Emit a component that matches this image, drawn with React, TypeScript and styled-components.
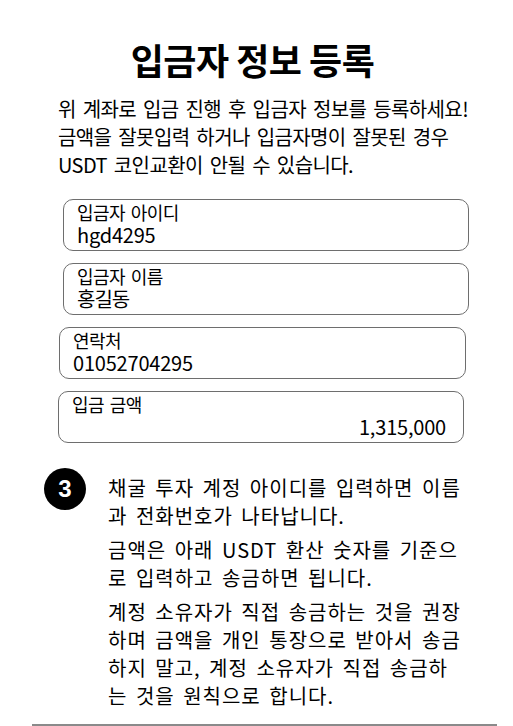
import React from 'react';
import styled, { createGlobalStyle } from 'styled-components';

interface Field {
  label: string,
  value: string,
  right?: boolean,
  hangul?: boolean,
  inset: [number, number]
}

const fields: Field[] = [
  { label: '입금자 아이디', value: 'hgd4295', inset: [63, 44] },
  { label: '입금자 이름', value: '홍길동', hangul: true, inset: [63, 44] },
  { label: '연락처', value: '01052704295', inset: [59, 47] },
  { label: '입금 금액', value: '1,315,000', right: true, inset: [58, 49] },
]

const App = () => {
  return (
    <Page>
      <GlobalStyle />
      <Title>입금자 정보 등록</Title>
      <Intro>
        위 계좌로 입금 진행 후 입금자 정보를 등록하세요!<br />
        금액을 잘못입력 하거나 입금자명이 잘못된 경우<br />
        USDT 코인교환이 안될 수 있습니다.
      </Intro>

      <Form>
        {fields.map((f) => (
          <Box key={f.label} $left={f.inset[0]} $right={f.inset[1]}>
            <Label>{f.label}</Label>
            <Value $alignRight={f.right} $hangul={f.hangul}>{f.value}</Value>
          </Box>
        ))}
      </Form>

      <Step>
        <Badge>3</Badge>
        <StepBody>
          <Para>
            채굴 투자 계정 아이디를 입력하면 이름<br />
            과 전화번호가 나타납니다.
          </Para>
          <Para>
            금액은 아래 USDT 환산 숫자를 기준으<br />
            로 입력하고 송금하면 됩니다.
          </Para>
          <Para>
            계정 소유자가 직접 송금하는 것을 권장<br />
            하며 금액을 개인 통장으로 받아서 송금<br />
            하지 말고, 계정 소유자가 직접 송금하<br />
            는 것을 원칙으로 합니다.
          </Para>
        </StepBody>
      </Step>

      <Rule />
    </Page>
  );
};

const GlobalStyle = createGlobalStyle`
  html, body {
    margin: 0;
    padding: 0;
    background: #fff;
  }
  body {
    font-family: "Noto Sans CJK KR", "Noto Sans", sans-serif;
    color: #000;
  }
`;

const Page = styled.div`
  width: 513px;
  height: 726px;
  overflow: hidden;
  display: flex;
  flex-direction: column;
`;

const Title = styled.h1`
  margin: 37px 8px 0 0;
  font-size: 36px;
  line-height: 44px;
  font-weight: 700;
  letter-spacing: -0.5px;
  text-align: center;
`;

const Intro = styled.p`
  margin: 14px 0 0 58px;
  font-size: 20px;
  line-height: 28px;
  letter-spacing: -0.6px;
  word-spacing: 3px;
  white-space: nowrap;
`;

const Form = styled.div`
  display: flex;
  flex-direction: column;
  gap: 12px;
  margin-top: 20px;
`;

const Box = styled.div<{ $left: number, $right: number }>`
  margin: 0 ${(p) => p.$right}px 0 ${(p) => p.$left}px;
  height: 52px;
  box-sizing: border-box;
  padding: 2px 17px 0 13px;
  border: 1.5px solid #6e6e6e;
  border-radius: 10px;
  display: flex;
  flex-direction: column;
`;

const Label = styled.div`
  font-size: 18px;
  line-height: 21px;
  letter-spacing: -0.5px;
  word-spacing: 2px;
`;

const Value = styled.div<{ $alignRight?: boolean, $hangul?: boolean }>`
  font-size: 20px;
  line-height: 23px;
  text-align: ${(p) => (p.$alignRight ? 'right' : 'left')};
  letter-spacing: ${(p) => (p.$hangul ? '-1px' : '-0.2px')};
`;

const Step = styled.div`
  display: flex;
  align-items: flex-start;
  gap: 22px;
  margin: 31px 0 0 44px;
`;

const Badge = styled.div`
  flex: none;
  width: 42px;
  height: 42px;
  margin-top: -6px;
  border-radius: 50%;
  background: #000;
  color: #fff;
  display: flex;
  align-items: center;
  justify-content: center;
  font-family: "Liberation Sans", Arial, sans-serif;
  font-weight: 700;
  font-size: 24px;
`;

const StepBody = styled.div`
  display: flex;
  flex-direction: column;
  gap: 6px;
`;

const Para = styled.p`
  margin: 0;
  font-size: 20px;
  line-height: 28px;
  letter-spacing: 1px;
  word-spacing: 3px;
  white-space: nowrap;
`;

const Rule = styled.div`
  margin: auto 16px 0 32px;
  height: 2px;
  background: #8a8a8a;
`;

export default App;
